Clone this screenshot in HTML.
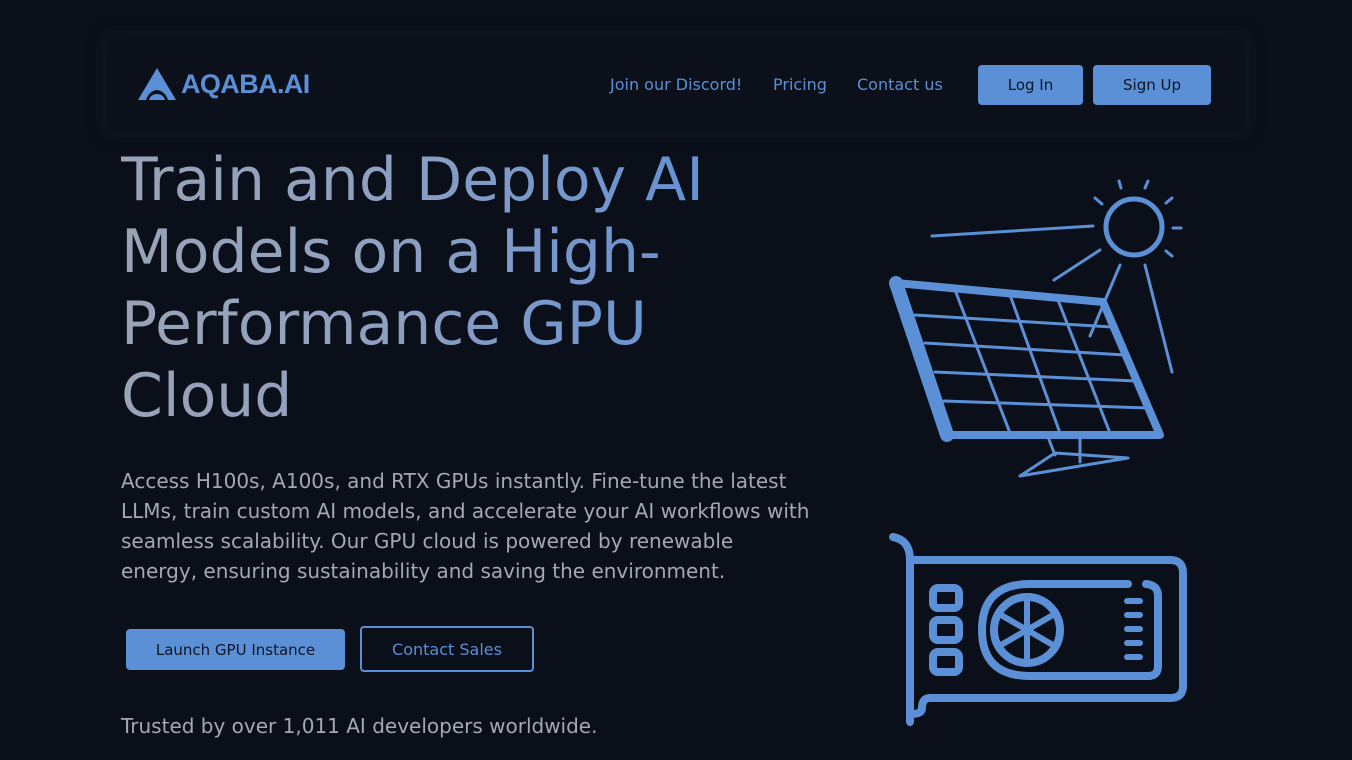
<!DOCTYPE html>
<html><head><meta charset="utf-8"><style>
*{margin:0;padding:0;box-sizing:border-box}
body{width:1352px;height:760px;overflow:hidden;background:#0b0f19;font-family:"DejaVu Sans","Liberation Sans",sans-serif;position:relative}
.nav{position:absolute;left:107px;top:37px;width:1138px;height:95px;background:#0c101a;box-shadow:0 0 14px 4px rgba(20,25,38,.8);border-radius:4px}
.logo{position:absolute;left:137px;top:67px;display:flex;align-items:center}
.logo span{font-family:"Liberation Sans",sans-serif;font-weight:bold;font-size:27px;color:#5b8fd6;margin-left:4px;letter-spacing:-0.6px}
.links{position:absolute;top:75px;font-size:16px;color:#5b8fd6}
.btn{position:absolute;background:#5b8fd6;color:#0d1626;font-size:15px;border-radius:4px;display:flex;align-items:center;justify-content:center}
h1{position:absolute;left:121px;top:144px;width:640px;font-weight:normal;font-size:60px;line-height:72px;background:linear-gradient(90deg,#9aa3b6 0%,#8fa0c0 40%,#5b8fd6 100%);-webkit-background-clip:text;background-clip:text;color:transparent}
p.d{position:absolute;left:121px;top:466px;width:695px;font-size:20px;line-height:30px;color:#a3a8b5}
p.t{position:absolute;left:121px;top:714px;font-size:20px;color:#a3a8b5}
.out{position:absolute;left:360px;top:626px;width:174px;height:46px;border:2px solid #5b8fd6;border-radius:4px;color:#5b8fd6;font-size:16px;display:flex;align-items:center;justify-content:center}
</style></head><body>
<div class="nav"></div>
<div class="logo"><svg width="40" height="34" viewBox="0 0 40 34"><path d="M20 1 L1 33 L9 33 Q12 24 20 23 Q28 24 31 33 L39 33 Z" fill="#5b8fd6"/><path d="M12 33 Q14 27 20 27 Q26 27 28 33Z" fill="#5b8fd6"/></svg><span>AQABA.AI</span></div>
<div class="links" style="left:610px">Join our Discord!</div>
<div class="links" style="left:773px">Pricing</div>
<div class="links" style="left:857px">Contact us</div>
<div class="btn" style="left:978px;top:65px;width:105px;height:40px">Log In</div>
<div class="btn" style="left:1093px;top:65px;width:118px;height:40px">Sign Up</div>
<h1>Train and Deploy AI Models on a High-Performance GPU Cloud</h1>
<p class="d">Access H100s, A100s, and RTX GPUs instantly. Fine-tune the latest LLMs, train custom AI models, and accelerate your AI workflows with seamless scalability. Our GPU cloud is powered by renewable<br>energy, ensuring sustainability and saving the environment.</p>
<div class="btn" style="left:126px;top:629px;width:219px;height:41px">Launch GPU Instance</div>
<div class="out">Contact Sales</div>
<p class="t">Trusted by over 1,011 AI developers worldwide.</p>
<svg style="position:absolute;left:0;top:0" width="1352" height="760" fill="none" stroke="#5b8fd6" stroke-linecap="round" stroke-linejoin="round">
<g stroke-width="3">
<circle cx="1134" cy="227" r="28" stroke-width="5"/>
<line x1="932" y1="236" x2="1093" y2="226"/>
<line x1="1054" y1="280" x2="1100" y2="250"/>
<line x1="1120" y1="265" x2="1090" y2="336"/>
<line x1="1145" y1="265" x2="1172" y2="372"/>
<line x1="1119" y1="181" x2="1121" y2="188"/>
<line x1="1148" y1="181" x2="1145" y2="188"/>
<line x1="1095" y1="198" x2="1102" y2="204"/>
<line x1="1172" y1="198" x2="1166" y2="203"/>
<line x1="1173" y1="228" x2="1181" y2="228"/>
<line x1="1166" y1="251" x2="1172" y2="256"/>
</g>
<path d="M896 283 L1103 302 L1160 435 L947 435 Z" stroke-width="8"/>
<path d="M896 283 L947 435" stroke-width="14"/>
<g stroke-width="3">
<line x1="915" y1="315" x2="1112" y2="327"/>
<line x1="925" y1="343" x2="1125" y2="355"/>
<line x1="935" y1="372" x2="1136" y2="381"/>
<line x1="944" y1="401" x2="1148" y2="408"/>
<line x1="955" y1="290" x2="1010" y2="433"/>
<line x1="1010" y1="295" x2="1060" y2="433"/>
<line x1="1058" y1="300" x2="1110" y2="433"/>
<path d="M1048 437 L1055 455 M1080 437 L1080 462 M1020 476 L1128 458 L1055 453 Z"/>
</g>
<g stroke-width="8">
<path d="M893 537 Q910 540 910 560 L910 722"/>
<path d="M910 560 L1170 560 Q1183 560 1183 573 L1183 686 Q1183 698 1170 698 L930 698 Q922 698 922 708 Q922 714 912 714"/>
<path d="M1128 584 L1030 584 Q982 584 982 630 Q982 676 1030 676 L1148 676 Q1158 676 1158 666 L1158 596 Q1158 585 1146 584"/>
<circle cx="1027" cy="630" r="33"/>
<rect x="933" y="588" width="26" height="20" rx="5"/>
<rect x="933" y="620" width="26" height="20" rx="5"/>
<rect x="933" y="652" width="26" height="20" rx="5"/>
</g>
<g stroke-width="6">
<line x1="1127" y1="601" x2="1140" y2="601"/><line x1="1127" y1="615" x2="1140" y2="615"/><line x1="1127" y1="629" x2="1140" y2="629"/><line x1="1127" y1="643" x2="1140" y2="643"/><line x1="1127" y1="657" x2="1140" y2="657"/>
<line x1="1027" y1="600" x2="1027" y2="660"/><line x1="1001" y1="615" x2="1053" y2="645"/><line x1="1001" y1="645" x2="1053" y2="615"/>
</g>
</svg>
</body></html>
